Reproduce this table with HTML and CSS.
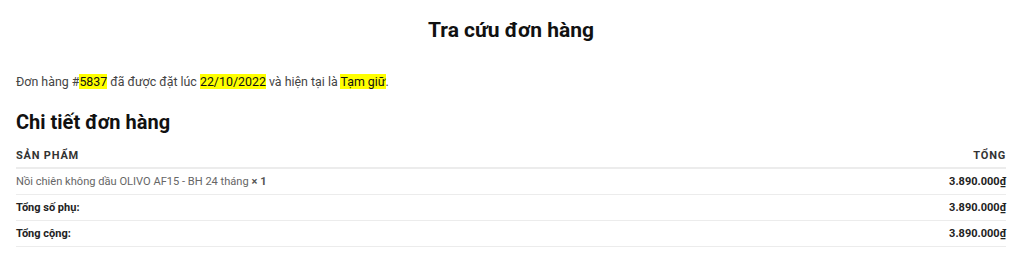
FILE: index.html
```html
<!DOCTYPE html>
<html lang="vi">
<head>
<meta charset="utf-8">
<link rel="stylesheet" href="styles.css">
</head>
<body>
<main class="page">
  <h1 class="page-title">Tra cứu đơn hàng</h1>
  <p class="order-info">Đơn hàng #<mark>5837</mark> đã được đặt lúc <mark>22/10/2022</mark> và hiện tại là <mark>Tạm giữ</mark>.</p>
  <h2 class="section-title">Chi tiết đơn hàng</h2>
  <table class="order-table">
    <thead>
      <tr><th class="col-name">Sản phẩm</th><th class="col-total">Tổng</th></tr>
    </thead>
    <tbody>
      <tr><td class="col-name product">Nồi chiên không dầu OLIVO AF15 - BH 24 tháng <strong class="qty">× 1</strong></td><td class="col-total amount">3.890.000₫</td></tr>
    </tbody>
    <tfoot>
      <tr><th class="col-name">Tổng số phụ:</th><td class="col-total amount">3.890.000₫</td></tr>
      <tr><th class="col-name">Tổng cộng:</th><td class="col-total amount">3.890.000₫</td></tr>
    </tfoot>
  </table>
</main>
</body>
</html>
```

FILE: styles.css
```css
html, body {
  margin: 0;
  padding: 0;
  background: #ffffff;
}
body {
  font-family: Roboto, "Noto Sans", Arial, sans-serif;
  color: #333333;
}
.page {
  padding: 0 18px 0 16px;
}
.page-title {
  margin: 0;
  padding-top: 16px;
  text-align: center;
  font-size: 21px;
  font-weight: 700;
  line-height: 28px;
  color: #111111;
}
.order-info {
  margin: 29px 0 0;
  font-size: 12.4px;
  line-height: 18px;
  color: #444444;
}
.order-info mark {
  background: #ffff00;
  color: #111111;
}
.section-title {
  margin: 17px 0 0;
  font-size: 20px;
  font-weight: 700;
  line-height: 28px;
  color: #111111;
}
.order-table {
  width: 100%;
  border-collapse: collapse;
  margin-top: 8px;
  font-size: 11px;
}
.order-table th,
.order-table td {
  padding: 0;
  height: 25px;
  border-bottom: 1px solid #ececec;
  vertical-align: middle;
}
.order-table thead th {
  height: 23px;
  text-transform: uppercase;
  letter-spacing: 0.8px;
  font-weight: 700;
  color: #333333;
  border-bottom: 2px solid #ececec;
}
.col-name { text-align: left; }
.col-total { text-align: right; }
.product {
  color: #666666;
  font-size: 11.1px;
}
.qty {
  color: #555555;
}
.amount {
  font-weight: 700;
  color: #222222;
}
.order-table tfoot th {
  font-weight: 700;
  color: #222222;
}
```
